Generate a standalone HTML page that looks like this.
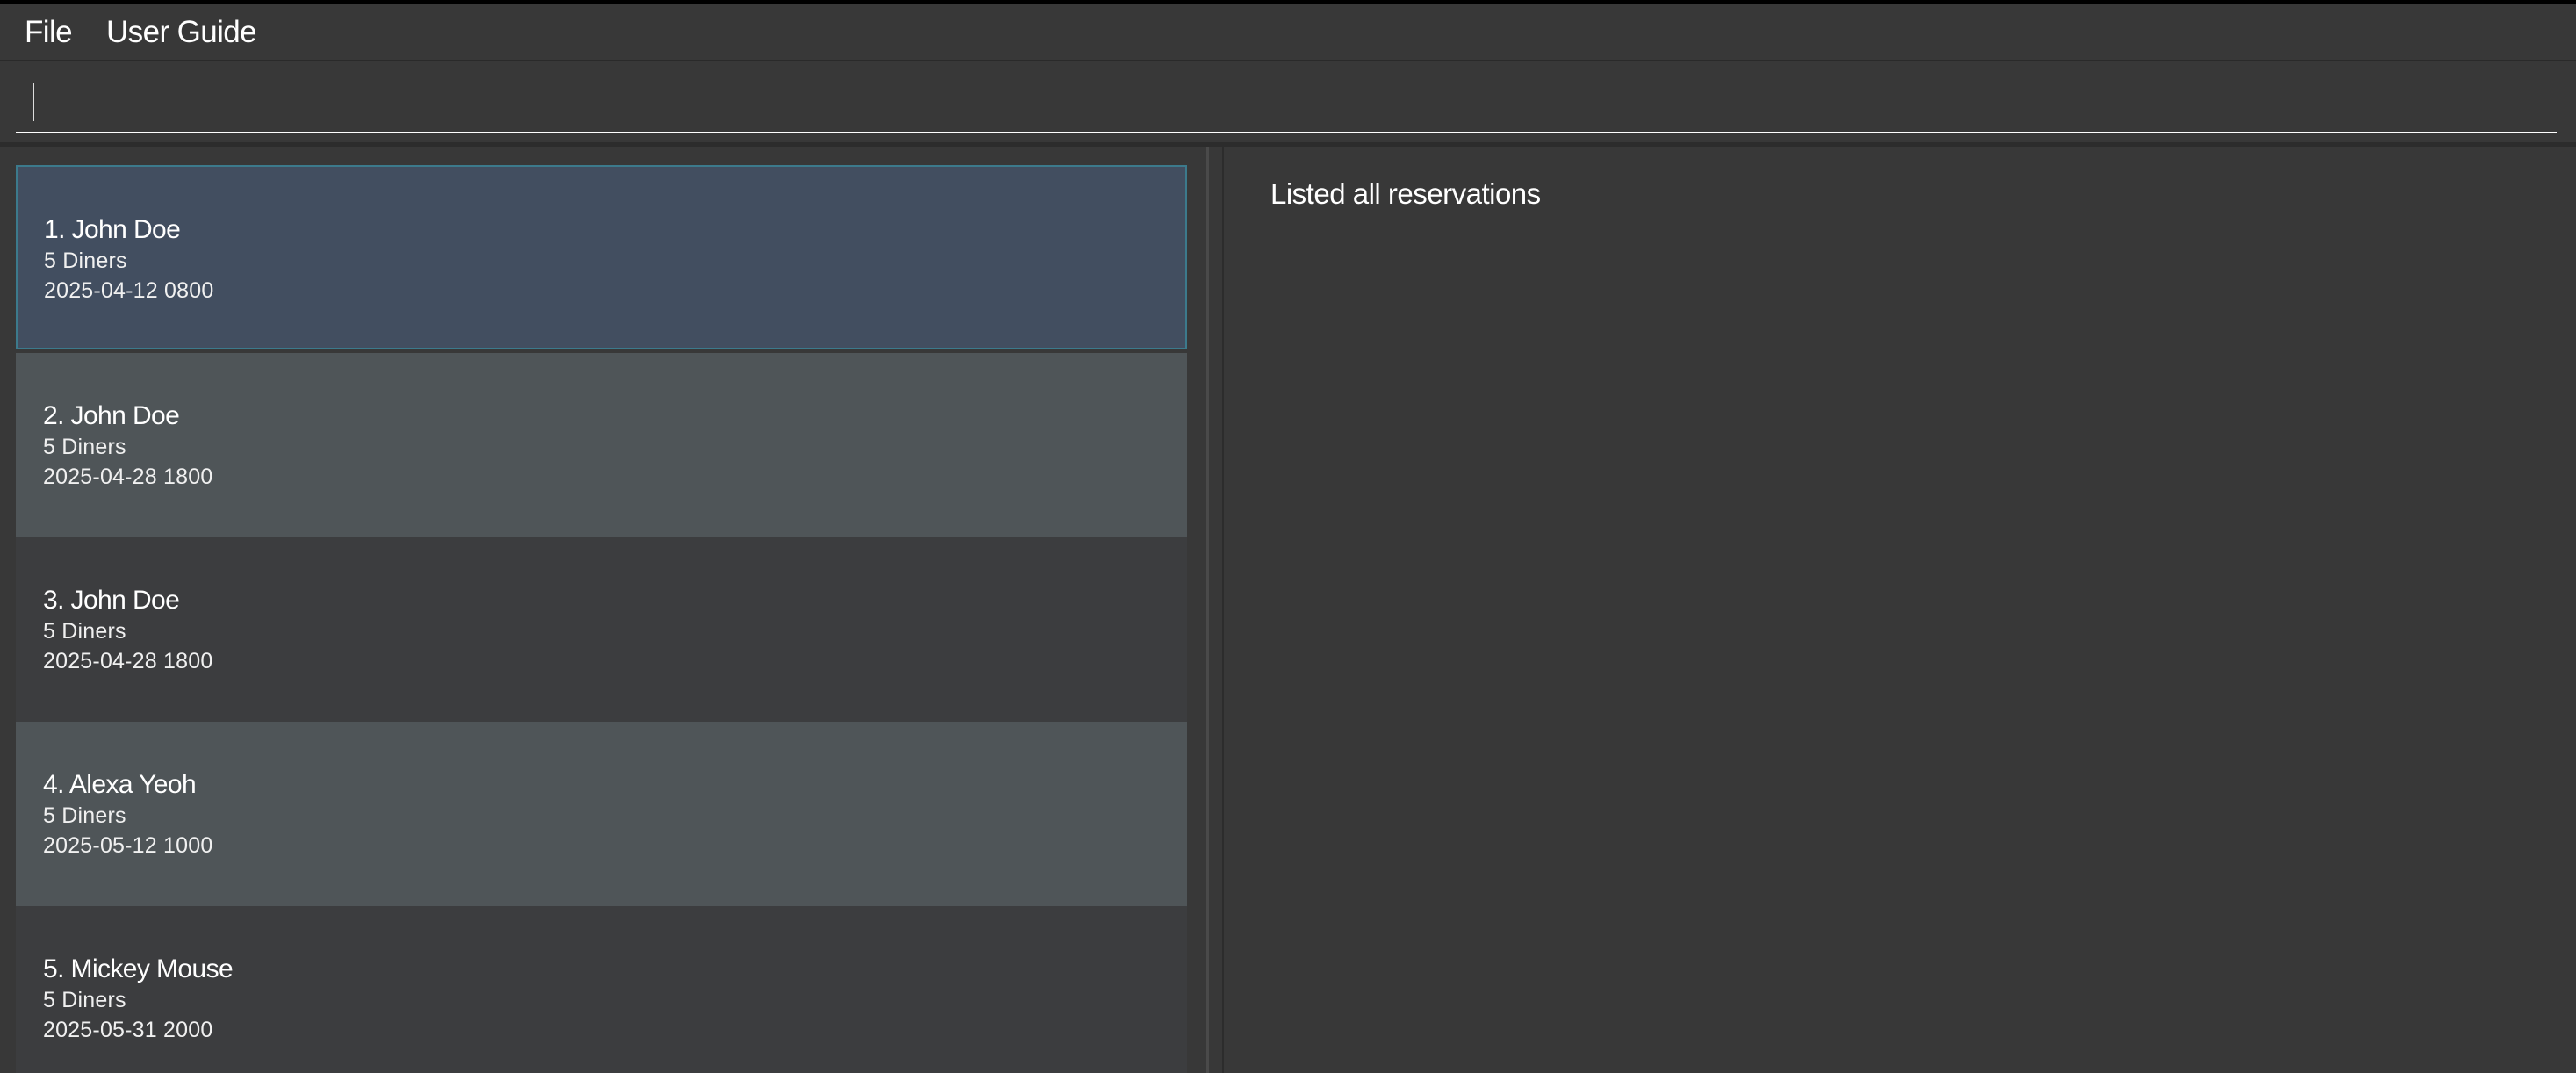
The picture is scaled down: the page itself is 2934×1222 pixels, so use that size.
<!DOCTYPE html>
<html style="width:2934px;height:1222px;overflow:hidden"><head><style>
*{margin:0;padding:0;box-sizing:border-box}
body{width:2934px;height:1222px;background:#383838;overflow:hidden;font-family:"Liberation Sans",sans-serif;color:#fff;position:relative}
.abs{position:absolute}
.t{position:absolute;white-space:nowrap;line-height:1}
.card{position:absolute;left:18px;width:1334px;height:210px;overflow:hidden}
.n{position:absolute;left:31px;font-size:30px;color:#fff;letter-spacing:-0.6px;white-space:nowrap;line-height:1}
.s{position:absolute;left:31px;font-size:25px;color:#f0f0f0;letter-spacing:0.2px;white-space:nowrap;line-height:1}
</style></head><body>
<div class="abs" style="left:0;top:0;width:2934px;height:4px;background:#000"></div>
<div class="t" style="left:28px;top:19px;font-size:35px;letter-spacing:-0.6px">File</div>
<div class="t" style="left:121px;top:19px;font-size:35px;letter-spacing:-0.6px">User Guide</div>
<div class="abs" style="left:0;top:68px;width:2934px;height:2px;background:#2a2a2a"></div>
<div class="abs" style="left:38px;top:94px;width:1px;height:44px;background:#ddd"></div>
<div class="abs" style="left:18px;top:150px;width:2894px;height:2px;background:#fff"></div>
<div class="abs" style="left:0;top:162px;width:2934px;height:5px;background:#2c2c2c"></div>
<div class="abs" style="left:1374px;top:167px;width:3px;height:1055px;background:#4a4a4a"></div>
<div class="abs" style="left:1392px;top:167px;width:2px;height:1055px;background:#2c2c2c"></div>
<div class="t" style="left:1447px;top:204px;font-size:33px;letter-spacing:-0.5px">Listed all reservations</div>

<div class="card" style="top:188px;background:#424e60;border:2px solid #3c7a8c">
<div class="n" style="top:57px;left:30px">1. John Doe</div>
<div class="s" style="top:95px;left:30px">5 Diners</div>
<div class="s" style="top:129px;left:30px">2025-04-12 0800</div></div>

<div class="card" style="top:402px;background:#4f5558">
<div class="n" style="top:57px">2. John Doe</div>
<div class="s" style="top:95px">5 Diners</div>
<div class="s" style="top:129px">2025-04-28 1800</div></div>

<div class="card" style="top:612px;background:#3c3d3f">
<div class="n" style="top:57px">3. John Doe</div>
<div class="s" style="top:95px">5 Diners</div>
<div class="s" style="top:129px">2025-04-28 1800</div></div>

<div class="card" style="top:822px;background:#4f5558">
<div class="n" style="top:57px">4. Alexa Yeoh</div>
<div class="s" style="top:95px">5 Diners</div>
<div class="s" style="top:129px">2025-05-12 1000</div></div>

<div class="card" style="top:1032px;height:190px;background:#3c3d3f">
<div class="n" style="top:57px">5. Mickey Mouse</div>
<div class="s" style="top:95px">5 Diners</div>
<div class="s" style="top:129px">2025-05-31 2000</div></div>
</body></html>
